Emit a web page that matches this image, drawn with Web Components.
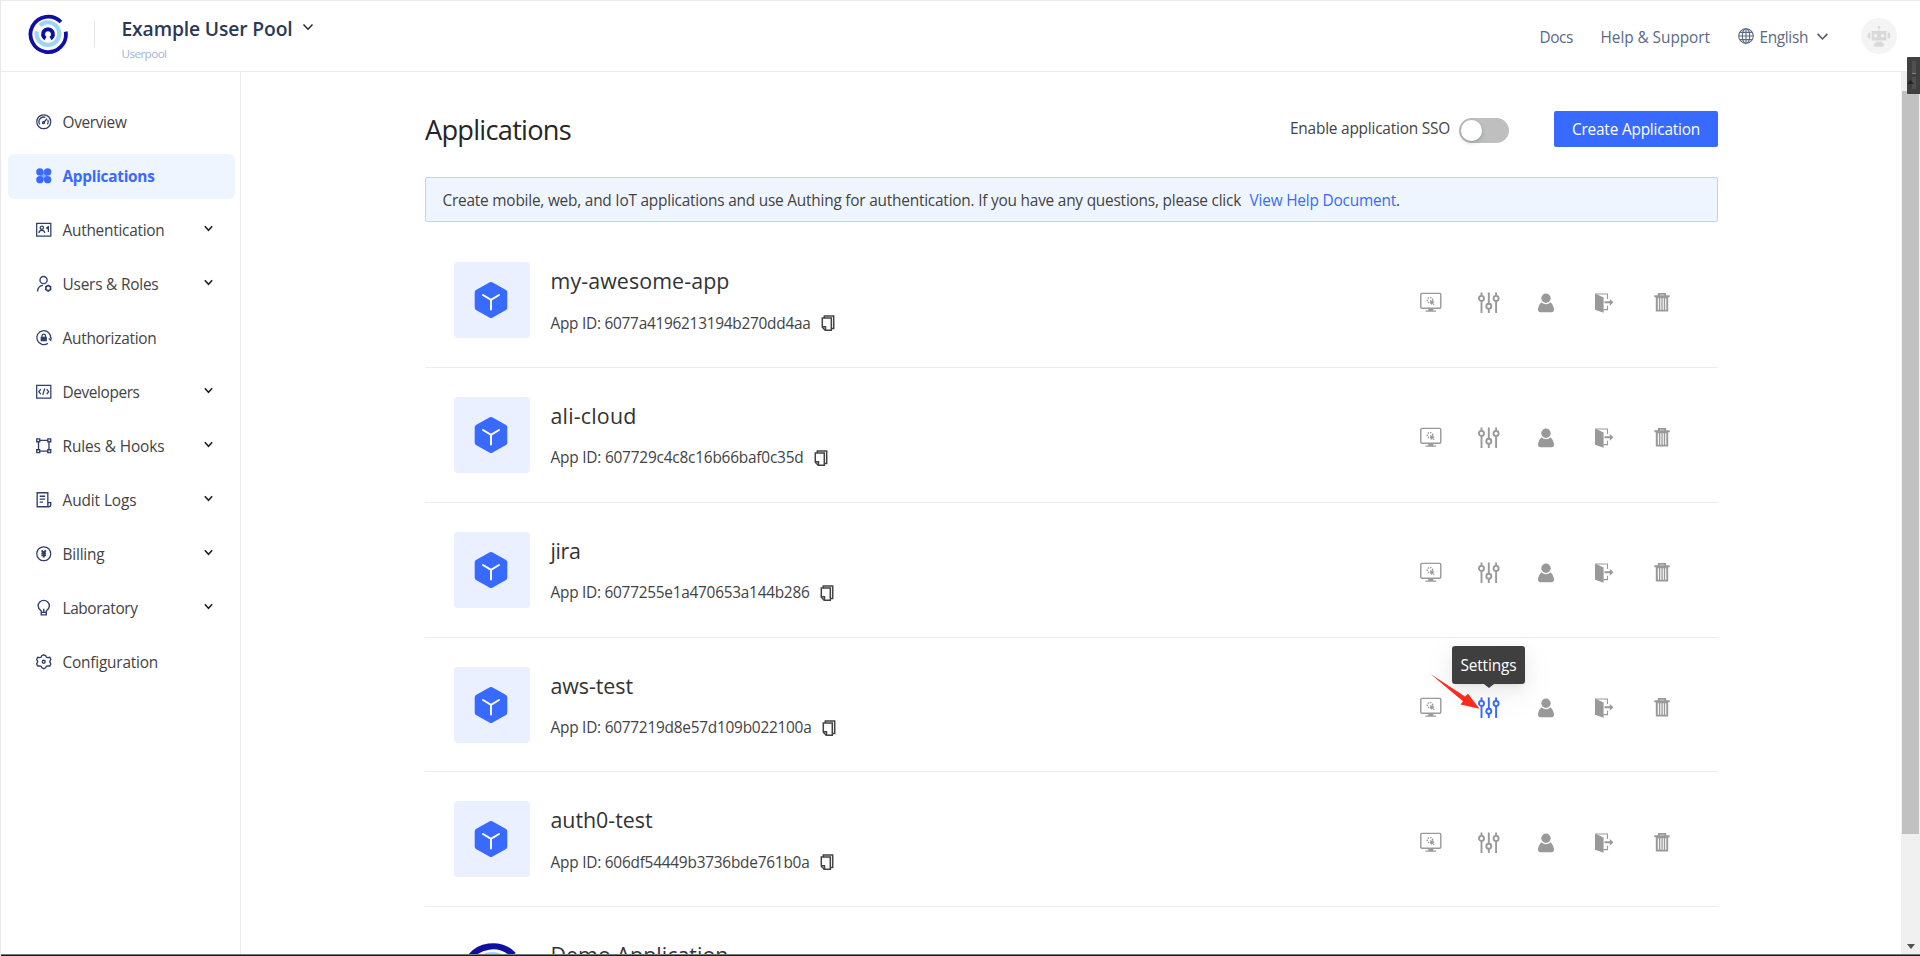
<!DOCTYPE html>
<html lang="en">
<head>
<meta charset="utf-8">
<title>Applications</title>
<style>
html,body{margin:0;height:100%;overflow:hidden;background:#fff}
body{font-family:"Open Sans","Noto Sans",sans-serif;font-size:15.4px;color:#434343}
</style>
</head>
<body>
<console-app></console-app>
<script>
const define = (name, html, init) => customElements.define(name, class extends HTMLElement {
  connectedCallback() {
    if (this.shadowRoot) return;
    const root = this.attachShadow({ mode: 'open' });
    const t = document.createElement('template');
    t.innerHTML = typeof html === 'function' ? html(this) : html;
    root.append(t.content.cloneNode(true));
    if (init) init(this, root);
  }
});

const stroke = (w, body) => `<g fill="none" stroke="currentColor" stroke-width="${w}">${body}</g>`;
const icons = {
  overview: stroke(1.3, '<circle cx="8" cy="8" r="7.2"/><path d="M4.1 10.8A4.7 4.7 0 0 1 9.7 3.6M12.2 6A4.7 4.7 0 0 1 11.8 10.8M8 8.8 11.4 4.8" /><circle cx="7.7" cy="9" r="1"/>'),
  apps: '<g fill="currentColor"><circle cx="4" cy="4" r="3.8"/><circle cx="12" cy="4" r="3.8"/><circle cx="4" cy="12" r="3.8"/><circle cx="12" cy="12" r="3.8"/><path d="M4 3h8v10H4z" opacity=".55"/></g>',
  card: stroke(1.3, '<path d="M.7 1.3h14.6v13.4H.7z"/><circle cx="6" cy="6" r="1.7"/><path d="M3 11.4C3.4 7.8 8.6 7.8 9 11.4M13.200 4.500l-2.200 1.700 2.200 1.500M12.800 4.800v5.500"/>'),
  users: stroke(1.4, '<circle cx="7.8" cy="4.2" r="3.7"/><path d="M1.6 16C1.8 12.2 4 10 7.2 9.7"/><path d="M12.6 9.7 15 11v3l-2.4 1.4-2.4-1.4v-3z" stroke-width="1.8"/>'),
  authz: stroke(1.3, '<path d="M12.2 13.8A7.2 7.2 0 1 1 15.2 8.4M13.2 8.6l2 2 .6-3"/><path d="M6.2 7.4V6a1.8 1.8 0 0 1 3.6 0v1.4"/>') + '<path fill="currentColor" d="M4.8 7h6.4v4.6H4.8z"/>',
  dev: stroke(1.3, '<path d="M.7 1.3h14.6v13.4H.7z"/><path d="M5 5.4 2.9 7.9 5 10.4M11 5.4l2.1 2.5L11 10.4M9 4.6 7 11.2"/>'),
  rules: stroke(1.4, '<path d="M.8.9h3v3h-3zM12.2.9h3v3h-3zM.8 12.1h3v3h-3zM12.2 12.1h3v3h-3zM3.8 2.4h8.4M3.8 13.6h8.4M2.6 3.9v8.2M13.4 3.9v8.2"/>'),
  logs: stroke(1.4, '<path d="M12.2 11V.8H1.2v14.4h12.2a1.8 1.8 0 0 0 1.8-1.8V11h-3v2.6c0 1 .4 1.4 1.2 1.6M3.8 4.4h5.6M3.8 7.4h5.6M3.8 10.4h3.4"/>'),
  bill: stroke(1.3, '<circle cx="8" cy="8" r="7.2"/><path stroke-width="1.900" d="M5.8 4.4 8 6.800l2.2-2.4M8 6.500v5.300M5.600 7.6h4.800M5.600 9.6h4.800"/>'),
  bulb: stroke(1.4, '<path d="M5.4 11.3C3.4 9.7 2.2 8.4 2.2 6.2a5.8 5.8 0 0 1 11.6 0c0 2.2-1.2 3.5-3.2 5.1v4H5.4zM5.4 12.8h5.2M8 9v3.5"/>'),
  cog: stroke(1.4, `<path stroke-linejoin="round" d="M6 1.7 8 .8l2 .9.6 1.5 1.7.5 2-.3 1 2.2-1.1 2.3 1.1 2.4-1 2.1-2-.2-1.7.6-.6 1.4-2 1-2-1-.6-1.4-1.7-.6-2 .2-1-2.1 1.1-2.4L.7 5.6l1-2.2 2 .3 1.700-.5z"/><circle cx="8" cy="8" r="1.5"/>`),
  down: stroke(1.9, '<path d="m2 4.8 6 6.2 6-6.2"/>'),
  fat: stroke(2.9, '<path d="m1.5 4 6.5 7 6.5-7"/>'),
  globe: stroke(1.1, '<circle cx="8" cy="8" r="7.3"/><ellipse cx="8" cy="8" rx="3.7" ry="7.3"/><path d="M8 .7v14.6M.7 8h14.6M1.7 4.4h12.6M1.7 11.6h12.6"/>'),
  copy: stroke(1.5, '<path d="M4.3 3V.9h9.4v12.6h-1.9"/><path d="M2.3 3.1h9v12.1H5.2l-2.9-2.9z"/><path d="M2.3 11.8h3.2v3.4"/>'),
  robot: '<g fill="#d9d9d9"><circle cx="18" cy="9.3" r="1.3"/><path d="M17.6 10h.8v3h-.8zM10.7 13h14.6v9.5H10.7zM6.8 16.2c0-1 1-1.6 2.5-1.6v6C7.8 20.600 6.800 20 6.800 19zM29.200 16.2c0-1-1-1.600-2.500-1.600v6c1.500 0 2.500-.6 2.500-1.600zM15 23.500h6v2h-6zM13.200 25h9.600v3.800h-9.600z"/></g><circle cx="14.400" cy="17.700" r="1.700" fill="#f4f4f4"/><circle cx="21.600" cy="17.700" r="1.700" fill="#f4f4f4"/>',
  monitor: '<g fill="none" stroke="currentColor"><rect x=".8" y="1.4" width="20" height="14.800" rx="1.200" stroke-width="1.400"/><circle cx="10" cy="8.200" r="2.700" stroke-width="1.500" stroke-dasharray="1.300 1.200"/></g><path fill="currentColor" d="m9.800 8 5 2-1.800.9 1.600 1.700-.8.700-1.600-1.700-.9 1.600zM8.300 17h5v1.400h2.800v1.400H5.500v-1.400h2.800z"/>',
  sliders: stroke(1.9, '<path d="M3.500.5v3.300M3.500 9v12M10.800.5v11M10.800 17v4M18.100.5v3.300M18.100 9v12"/><circle cx="3.500" cy="6.400" r="2.500"/><circle cx="10.800" cy="14.300" r="2.500"/><circle cx="18.100" cy="6.400" r="2.500"/>'),
  person: '<g fill="currentColor"><circle cx="11" cy="6.300" r="4.700"/><path d="M6.500 10.300c2.500 2.500 6.500 2.500 9 0 2.400 2 3.500 5.200 3.500 7.500 0 1.600-.8 2.500-2.600 2.500H5.600C3.800 20.300 3 19.400 3 17.800c0-2.300 1.100-5.500 3.500-7.500z"/></g>',
  door: '<path fill="currentColor" d="m2 1.500 8.600 4v15.300l-8.600-3z"/>' + stroke(1.1, '<path d="M2.500 2h12v5M14.500 13.800v3.800h-4"/>') + '<path fill="currentColor" d="M11.500 9.200h5.300V6.900l3.700 3.400-3.700 3.400v-2.400h-5.300z"/>',
  trash: stroke(1.9, '<path d="M3.300 4.200h15.400M7.800 3.800V1.900h6.400v1.900"/>') + '<path fill="currentColor" fill-rule="evenodd" d="M4.800 5h12.400v14.500H4.800zM6.800 6.200v11.600h1.100V6.200zM9.300 6.200v11.600h1.100V6.200zM11.700 6.200v11.600h1.100V6.200zM14.200 6.200v11.600h1.100V6.200z"/>'
};
const boxes = { robot: 36, monitor: 22, sliders: 22, person: 22, door: 22, trash: 22 };
define('ui-icon', el => {
  const n = el.getAttribute('name'), b = boxes[n] || 16, s = el.getAttribute('size') || b;
  return `<style>:host{display:block;flex:none;width:${s}px;height:${s}px}svg{display:block;overflow:visible}</style><svg width="${s}" height="${s}" viewBox="0 0 ${b} ${b}">${icons[n]}</svg>`;
});

/* Single-line label whose tracking is adjusted to fill the given width. */
define('ui-label', '<style>:host{display:block;white-space:nowrap;flex:none}span{display:inline-block}</style><span><slot></slot></span>', (el, root) => {
  const w = +el.getAttribute('w'); if (!w) return;
  const s = root.querySelector('span');
  const natural = s.getBoundingClientRect().width;
  s.style.letterSpacing = ((w - natural) / el.textContent.length) + 'px';
  el.style.width = w + 'px';
});

define('brand-mark', el => {
  const s = el.getAttribute('size') || 40;
  return `<style>:host{display:block;flex:none;width:${s}px;height:${s}px}svg{display:block}</style>
  <svg width="${s}" height="${s}" viewBox="0 0 40 40" fill="none"><path d="M32.900 8A17.700 17.700 0 1 0 37.700 17.600" stroke="#0f0fa3" stroke-width="3.800"/><path d="M11.900 11.600A11.300 11.300 0 1 1 8.800 17.400" stroke="#9bd6f6" stroke-width="4.200"/><path d="M17.500 24.600A5 5 0 1 1 22.500 24.600" stroke="#0f0fa3" stroke-width="4"/></svg>`;
});

define('top-bar', `<style>
:host{display:flex;align-items:flex-start;height:70px;flex:none;border-bottom:1px solid #ececec;border-top:1px solid #ececec;color:#5c6984}
brand-mark{margin:12.500px 0 0 27px}
.rule{width:1px;height:27px;background:#e6e6e6;margin:19px 26.500px 0 26px}
.pool{display:flex;flex-direction:column;width:180.500px}
.name{font-size:19.300px;font-weight:600;color:#2b3956;line-height:28px;margin-top:13.500px}
.kind{font-size:11.600px;color:#a3b2d5;line-height:16px;margin-top:3.500px}
.right{margin-left:auto;display:flex;align-items:center;height:72px;line-height:24px;padding-right:23px}
.right ui-label{margin-top:1px}
</style>
<brand-mark size="40"></brand-mark><div class="rule"></div>
<div class="pool"><ui-label class="name" w="171">Example User Pool</ui-label><ui-label class="kind" w="45">Userpool</ui-label></div>
<ui-icon name="down" size="12" style="color:#1f2433;margin-top:20px"></ui-icon>
<div class="right"><ui-label w="33.500">Docs</ui-label><ui-label w="109.500" style="margin-left:27.500px">Help &amp; Support</ui-label>
<ui-icon name="globe" size="16" style="margin:-2px 6px 0 27.500px"></ui-icon><ui-label w="48.500">English</ui-label>
<ui-icon name="down" size="13" style="margin:-2px 32px 0 8px;color:#4a556e"></ui-icon>
<ui-icon name="robot" style="background:#f4f4f4;border-radius:50%;margin-top:-2px"></ui-icon></div>`);

define('nav-item', el => `<style>
:host{display:flex;align-items:center;height:45px;margin-bottom:9px;border-radius:6px;padding:0 22px 0 28px;line-height:24px}
:host([active]){background:#eff5ff;color:#396aff;font-weight:700}
.i{color:#2f3f6b;margin:-1px 11px 0 0}:host([active]) .i{color:#396aff}
ui-label{margin-top:2px}
.c{margin:-3px 0 0 auto;color:#222}
</style><ui-icon class="i" size="15.500" name="${el.getAttribute('icon')}"></ui-icon><ui-label w="${el.getAttribute('w')}">${el.getAttribute('text')}</ui-label>${el.hasAttribute('more') ? '<ui-icon class="c" name="fat" size="9"></ui-icon>' : ''}`);

define('side-nav', () => `<style>:host{display:block;box-sizing:border-box;width:240px;flex:none;border-right:1px solid #ececec;padding:27.500px 5.500px 0 7px}</style>` + [
  ['overview','Overview',64],['apps','Applications',92,0,1],['card','Authentication',102,1],['users','Users &amp; Roles',96,1],['authz','Authorization',94],
  ['dev','Developers',77,1],['rules','Rules &amp; Hooks',102,1],['logs','Audit Logs',74,1],['bill','Billing',42,1],['bulb','Laboratory',75,1],['cog','Configuration',95.500]
].map(([i,t,w,m,a]) => `<nav-item icon="${i}" text="${t}" w="${w}" ${m ? 'more' : ''} ${a ? 'active' : ''}></nav-item>`).join(''));

define('tip-box', `<style>
:host{position:absolute;left:-26px;top:-51px;width:73.500px;height:38px;background:#3f3f3f;border-radius:3px;color:#fff;display:flex;align-items:center;justify-content:center;box-shadow:0 3px 6px -4px rgba(0,0,0,.12),0 6px 16px rgba(0,0,0,.06),0 9px 28px 8px rgba(0,0,0,.03)}
:host::after{content:"";position:absolute;top:38px;left:32px;border:5px solid transparent;border-top:4px solid #3f3f3f;border-bottom:0}
ui-label{margin-top:1px}
.arrow{position:absolute;left:-22px;top:27px;z-index:2}
</style><ui-label w="56">Settings</ui-label>
<svg class="arrow" width="52" height="38" viewBox="0 0 52 38"><path fill="#fa2a1c" d="M.5 1 35 23.500 38 20.700 49.500 35.700 30.500 31.500 33 28.200Z"/></svg>`);

define('app-row', el => {
  const name = el.getAttribute('name'), id = el.getAttribute('app'), hot = el.hasAttribute('hot'), demo = el.hasAttribute('demo');
  return `<style>
:host{display:flex;height:134.850px;box-sizing:border-box;border-bottom:1px solid #ededed;padding:0 45.500px 0 28.500px}
.tile{width:76px;height:76px;margin-top:29px;border-radius:4px;background:${demo ? 'none' : '#eaf0ff'};display:flex;align-items:center;justify-content:center;flex:none}
.info{margin-left:21px}
.name{font-size:21.400px;line-height:30px;margin-top:33px;color:#333}
.id{display:flex;align-items:center;line-height:24px;margin-top:15.500px;gap:9px}
.id ui-icon{margin-top:-1px}
.acts{margin:59.300px 0 0 auto;display:flex;width:252.500px;justify-content:space-between;color:#999;height:22px}
.hot{position:relative;color:#396aff}
</style>
<div class="tile">${demo ? '<brand-mark size="65" style="margin-left:2px"></brand-mark>' : '<svg width="34" height="38" viewBox="0 0 34 38" style="margin-right:1px"><path d="M17 3.500 30.800 11.200V26.800L17 34.500 3.200 26.800V11.200Z" fill="#396aff" stroke="#396aff" stroke-width="5" stroke-linejoin="round"/><path d="m9 14 8 4.800L25 14M17 18.800v9.700" fill="none" stroke="#fff" stroke-width="1.900" stroke-linecap="round"/></svg>'}</div>
<div class="info"><ui-label class="name" w="${el.getAttribute('nw')}">${name}</ui-label>${id ? `<div class="id"><ui-label w="${el.getAttribute('iw')}">App ID: ${id}</ui-label><ui-icon name="copy" size="16"></ui-icon></div>` : ''}</div>
${demo ? '' : `<div class="acts"><ui-icon name="monitor"></ui-icon><div class="${hot ? 'hot' : ''}"><ui-icon name="sliders"></ui-icon>${hot ? '<tip-box></tip-box>' : ''}</div><ui-icon name="person"></ui-icon><ui-icon name="door"></ui-icon><ui-icon name="trash"></ui-icon></div>`}`;
});

define('app-main', `<style>
:host{display:block;flex:1;min-width:0;overflow:hidden}
.col{width:1293px;margin-left:184px}
.head{display:flex;align-items:flex-start;height:105px;box-sizing:border-box}
h1{margin:39px auto 0 0;font-size:27.200px;font-weight:400;line-height:38px;color:#262626}
.sso{margin:45px 9px 0 0;line-height:24px}
.switch{width:50px;height:25px;border-radius:13px;background:#bfbfbf;margin-top:45.500px;padding:2px;box-sizing:border-box}
.switch i{display:block;width:21px;height:21px;border-radius:50%;background:#fff;box-shadow:0 2px 4px rgba(0,35,11,.2)}
.btn{width:164px;height:36px;border-radius:2px;background:#396aff;color:#fff;margin:39px 0 0 45px;display:flex;align-items:center;justify-content:center}
.btn ui-label{margin-top:1px}
.note{box-sizing:border-box;height:45px;border:1px solid #bfd2fb;background:#eff5ff;border-radius:2px;display:flex;align-items:center;padding-left:16.500px;line-height:24px}
.note ui-label{margin-top:2px}
.list{margin-top:11px}
</style><div class="col">
<div class="head"><h1><ui-label w="146">Applications</ui-label></h1><ui-label class="sso" w="160">Enable application SSO</ui-label><div class="switch"><i></i></div><div class="btn"><ui-label w="128">Create Application</ui-label></div></div>
<div class="note"><ui-label w="798.500">Create mobile, web, and IoT applications and use Authing for authentication. If you have any questions, please click</ui-label><ui-label w="146.500" style="color:#396aff;margin-left:8.500px">View Help Document</ui-label><ui-label>.</ui-label></div>
<div class="list">
<app-row name="my-awesome-app" nw="179" app="6077a4196213194b270dd4aa" iw="260"></app-row>
<app-row name="ali-cloud" nw="86" app="607729c4c8c16b66baf0c35d" iw="253"></app-row>
<app-row name="jira" nw="30" app="6077255e1a470653a144b286" iw="259"></app-row>
<app-row name="aws-test" nw="82.500" app="6077219d8e57d109b022100a" iw="261" hot></app-row>
<app-row name="auth0-test" nw="102" app="606df54449b3736bde761b0a" iw="259"></app-row>
<app-row name="Demo Application" nw="178" demo></app-row>
</div></div>`);

define('scroll-rail', `<style>
:host{display:flex;flex-direction:column;align-items:center;width:19px;flex:none;background:#f0f0f0}
.thumb{width:17px;height:743px;background:#c1c1c1;margin-top:19px}
.down{margin-top:110px;border:4.500px solid transparent;border-top:5px solid #505050;border-bottom:0}
</style><div class="thumb"></div><div class="down"></div>`);

define('edge-handle', `<style>
:host{position:absolute;right:0;top:57px;width:13px;height:37px;background:#404040;border-radius:1px 0 0 1px}
svg{display:block}
</style><svg width="13" height="37"><path d="M5 4h4v12H5zM5 20h4v12H5z" fill="#505050"/><path d="M5 16h4v1H5z" fill="#a77"/><path d="M0 27 3.500 23 7 27z" fill="#222"/></svg>`);

define('console-app', `<style>
:host{display:flex;flex-direction:column;position:relative;height:100vh;overflow:hidden;box-sizing:border-box;border-left:1px solid #e8e8e8}
.body{flex:1;display:flex;min-height:0}
.edge{height:1px;flex:none;background:#1c1c1c;border-top:1px solid #777}
</style><top-bar></top-bar><div class="body"><side-nav></side-nav><app-main></app-main><scroll-rail></scroll-rail></div><div class="edge"></div><edge-handle></edge-handle>`);
</script>
</body>
</html>
